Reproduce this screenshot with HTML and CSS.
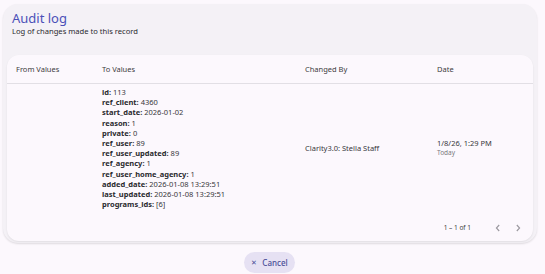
FILE: index.html
```html
<!DOCTYPE html>
<html>
<head>
<meta charset="utf-8">
<link rel="stylesheet" href="styles.css">
</head>
<body>
<div class="dialog">
  <div class="head">
    <h1 class="title">Audit log</h1>
    <p class="subtitle">Log of changes made to this record</p>
  </div>
  <div class="card">
    <div class="row header">
      <div>From Values</div>
      <div>To Values</div>
      <div>Changed By</div>
      <div>Date</div>
    </div>
    <div class="row body">
      <div></div>
      <div class="values">
        <div><b>id:</b> 113</div>
        <div><b>ref_client:</b> 4360</div>
        <div><b>start_date:</b> 2026-01-02</div>
        <div><b>reason:</b> 1</div>
        <div><b>private:</b> 0</div>
        <div><b>ref_user:</b> 89</div>
        <div><b>ref_user_updated:</b> 89</div>
        <div><b>ref_agency:</b> 1</div>
        <div><b>ref_user_home_agency:</b> 1</div>
        <div><b>added_date:</b> 2026-01-08 13:29:51</div>
        <div><b>last_updated:</b> 2026-01-08 13:29:51</div>
        <div><b>programs_ids:</b> [6]</div>
      </div>
      <div class="mid">Clarity3.0: Stella Staff</div>
      <div class="mid date">
        <div>1/8/26, 1:29 PM</div>
        <div class="today">Today</div>
      </div>
    </div>
    <div class="pager">
      <span class="range">1 – 1 of 1</span>
      <svg class="chev" viewBox="0 0 10 10" width="10" height="10"><path d="M6.2 2 L3.4 5 L6.2 8" fill="none" stroke="#9a979e" stroke-width="1.1"/></svg>
      <svg class="chev" viewBox="0 0 10 10" width="10" height="10"><path d="M3.8 2 L6.6 5 L3.8 8" fill="none" stroke="#9a979e" stroke-width="1.1"/></svg>
    </div>
  </div>
</div>
<div class="actions">
  <button class="cancel"><span class="x">✕</span>Cancel</button>
</div>
</body>
</html>
```
FILE: styles.css
```css
html, body {
  margin: 0;
  padding: 0;
  background: #fcf8fd;
  font-family: "Noto Sans", "Open Sans", sans-serif;
  color: #333;
}
.dialog {
  margin: 4px 8px 0 3px;
  background: #f4f1f6;
  border-radius: 15px;
  padding: 0 4px;
  height: 239px;
  box-sizing: border-box;
  box-shadow: 0 1px 2px rgba(0,0,0,0.12);
  overflow: hidden;
}
.head {
  padding: 7px 5px 0;
  height: 51px;
  box-sizing: border-box;
}
.title {
  margin: 0;
  font-size: 13px;
  line-height: 15.5px;
  font-weight: 400;
  color: #4b50b8;
}
.subtitle {
  margin: 0;
  font-size: 7.6px;
  line-height: 9.5px;
  color: #2a2a2f;
}
.card {
  background: #fcf8fd;
  border-radius: 12px;
  height: 186px;
  box-shadow: 0 1px 2px rgba(0,0,0,0.08);
  display: flex;
  flex-direction: column;
}
.row {
  display: grid;
  grid-template-columns: 86px 203px 132px 1fr;
  padding-left: 9px;
}
.header {
  height: 28px;
  align-items: center;
  font-size: 7.5px;
  color: #3c3b40;
  border-bottom: 1px solid #e2dfe5;
}
.body {
  padding-top: 3px;
  font-size: 7.5px;
  color: #38373c;
}
.values div {
  line-height: 10.2px;
}
.values b {
  font-weight: 700;
  color: #2a2a2e;
}
.mid {
  align-self: center;
}
.date div { line-height: 9.5px; }
.today {
  font-size: 6.5px;
  color: #7a787e;
}
.pager {
  margin-top: auto;
  height: 27px;
  display: flex;
  align-items: center;
  justify-content: flex-end;
  padding-right: 10px;
  font-size: 6.5px;
  color: #444;
  gap: 10px;
}
.range { margin-right: 12px; }
.actions {
  display: flex;
  justify-content: center;
  padding-top: 9px;
  padding-right: 6px;
}
.cancel {
  border: none;
  background: #e6e1f3;
  color: #4a4e98;
  border-radius: 11px;
  height: 21px;
  padding: 0 7px;
  font-family: "Noto Sans", "Open Sans", sans-serif;
  font-size: 8px;
  font-weight: 500;
  display: flex;
  align-items: center;
  gap: 5px;
}
.x { font-size: 6.5px; }
```
